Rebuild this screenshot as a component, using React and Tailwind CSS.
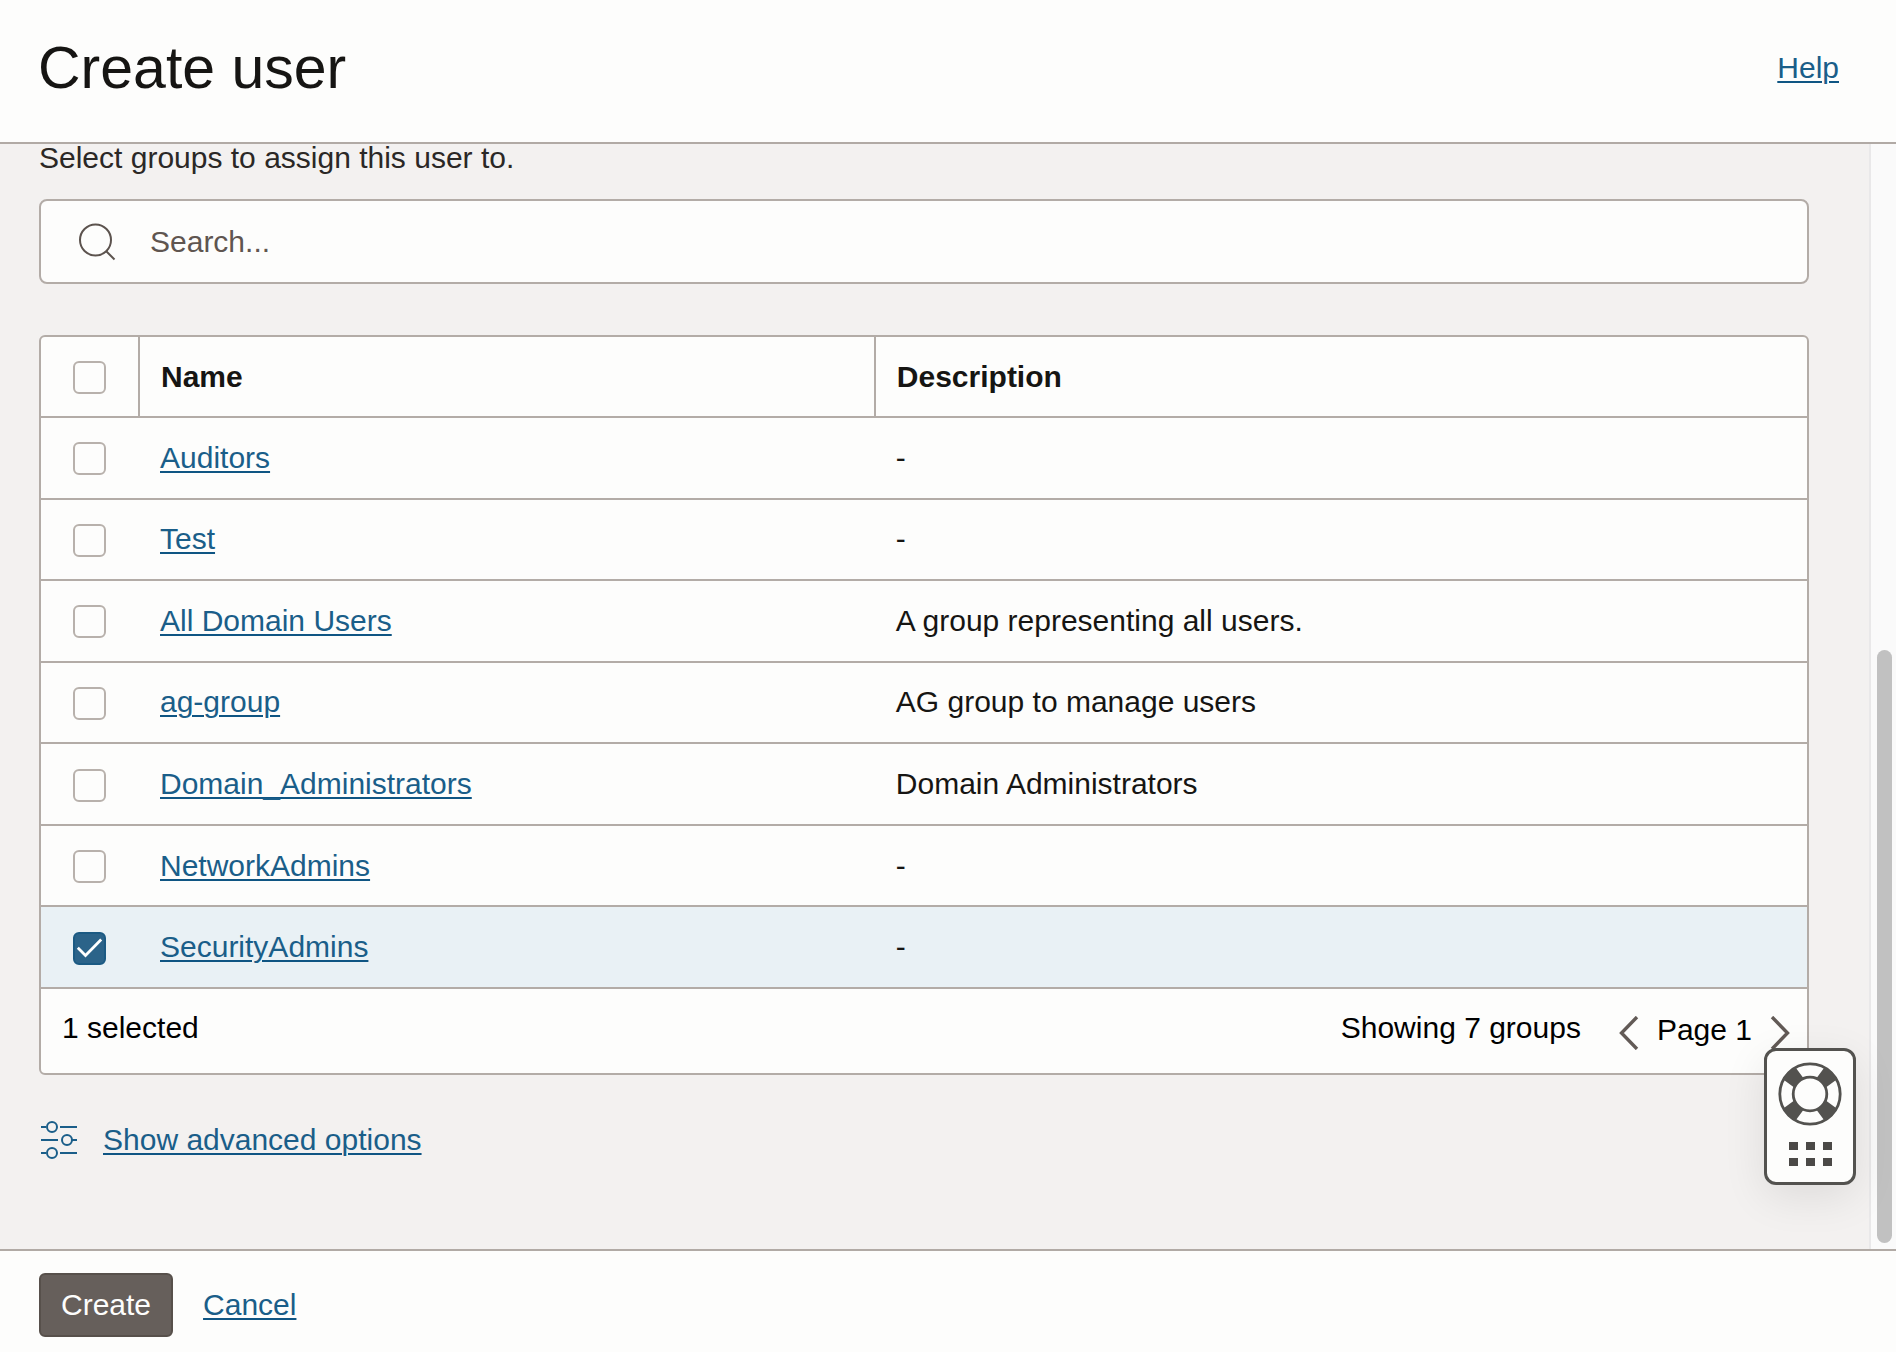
import { useState } from "react";

const GROUPS = [
  { name: "Auditors", description: "-" },
  { name: "Test", description: "-" },
  { name: "All Domain Users", description: "A group representing all users." },
  { name: "ag-group", description: "AG group to manage users" },
  { name: "Domain_Administrators", description: "Domain Administrators" },
  { name: "NetworkAdmins", description: "-" },
  { name: "SecurityAdmins", description: "-" },
];

function TextLink({ children }) {
  return (
    <a
      href="#"
      className="text-[#1a5e89] underline decoration-[#0f5583] decoration-2 underline-offset-[3px]"
    >
      {children}
    </a>
  );
}

function Checkbox({ label, checked, onChange }) {
  return (
    <label className="mx-auto grid size-[33px] cursor-pointer">
      <input
        type="checkbox"
        aria-label={label}
        checked={checked}
        onChange={onChange}
        className="peer col-start-1 row-start-1 size-[33px] appearance-none rounded-md border-2 border-[#b8b1ac] bg-[#fdfdfc] checked:border-[#1b5a83] checked:bg-[#2b6389]"
      />
      <svg
        viewBox="0 0 33 33"
        className="pointer-events-none col-start-1 row-start-1 hidden size-[33px] peer-checked:block"
        fill="none"
        stroke="#fff"
        strokeWidth="2.8"
      >
        <path d="M4.8 15.8l7.7 7.7L28.2 7.5" />
      </svg>
    </label>
  );
}

function SearchIcon() {
  return (
    <svg viewBox="0 0 38 38" className="size-[38px]" fill="none" stroke="#5c534e" strokeWidth="2">
      <circle cx="17.5" cy="17" r="15.5" />
      <path d="M28 28l8.5 8.5" />
    </svg>
  );
}

function SlidersIcon() {
  return (
    <svg viewBox="0 0 38 38" className="size-[38px]" fill="none" stroke="#1a5e89" strokeWidth="2">
      <path d="M2 6h5M21 6h17M2 19h17M33 19h5M2 32h5M21 32h17" />
      <circle cx="13" cy="6" r="5" />
      <circle cx="28" cy="19" r="5" />
      <circle cx="13" cy="32" r="5" />
    </svg>
  );
}

function Chevron({ direction }) {
  return (
    <svg viewBox="0 0 20 34" className="h-[34px] w-5" fill="none" stroke="#625a56" strokeWidth="3.4">
      <path d={direction === "left" ? "M18 1L2.5 17L18 33" : "M2 1L17.5 17L2 33"} />
    </svg>
  );
}

function LifebuoyIcon() {
  return (
    <svg viewBox="0 0 64 64" className="size-16" fill="none" stroke="#53524f">
      <circle cx="32" cy="32" r="30.2" strokeWidth="2.8" />
      <circle cx="32" cy="32" r="16.8" strokeWidth="2.8" />
      <g fill="#53524f" stroke="none">
        {[45, 135, 225, 315].map((angle) => (
          <path
            key={angle}
            d="M25.6 17L23.3 2.4Q32 -0.4 40.7 2.4L38.4 17Q32 14.2 25.6 17Z"
            transform={`rotate(${angle} 32 32)`}
          />
        ))}
      </g>
    </svg>
  );
}

export default function App() {
  const [selected, setSelected] = useState(["SecurityAdmins"]);
  const toggle = (name) =>
    setSelected((list) =>
      list.includes(name) ? list.filter((item) => item !== name) : [...list, name]
    );
  const allSelected = selected.length === GROUPS.length;

  return (
    <div className="flex h-screen flex-col bg-[#fdfdfc] font-['Liberation_Sans',Arial,sans-serif] text-[30px] leading-9 text-[#161513]">
      <header className="flex h-36 shrink-0 items-center justify-between border-b-2 border-[#b1aaa5] pr-[57px] pb-1.5 pl-[38px]">
        <h1 className="text-[59px] leading-none">Create user</h1>
        <TextLink>Help</TextLink>
      </header>

      <div className="flex min-h-0 flex-1 bg-[#f3f1f0]">
        <main className="min-w-0 flex-1 overflow-hidden pr-[60px] pl-[39px]">
          <p className="leading-7 text-[#2b2826]">Select groups to assign this user to.</p>

          <div className="mt-[27px] flex h-[85px] items-center gap-[34px] rounded-lg border-2 border-[#b3aca7] bg-[#fdfdfc] px-[37px]">
            <SearchIcon />
            <input
              type="search"
              aria-label="Search groups"
              placeholder="Search..."
              className="min-w-0 flex-1 bg-transparent outline-none placeholder:text-[#5f5550]"
            />
          </div>

          <section className="mt-[51px] overflow-hidden rounded-md border-2 border-[#b3aca7] bg-[#fdfdfc]">
            <table className="h-[652px] w-full table-fixed border-separate border-spacing-0 text-left">
              <thead>
                <tr className="h-[81px]">
                  <th className="w-[99px] border-r-2 border-b-2 border-[#b3aca7] pt-0.5">
                    <Checkbox
                      label="Select all groups"
                      checked={allSelected}
                      onChange={() => setSelected(allSelected ? [] : GROUPS.map((g) => g.name))}
                    />
                  </th>
                  <th className="w-5/12 border-r-2 border-b-2 border-[#b3aca7] px-[21px] font-bold">Name</th>
                  <th className="border-b-2 border-[#b3aca7] px-[21px] font-bold">Description</th>
                </tr>
              </thead>
              <tbody>
                {GROUPS.map((group) => {
                  const checked = selected.includes(group.name);
                  return (
                    <tr key={group.name} className={checked ? "bg-[#e9f1f5]" : ""}>
                      <td className="border-b-2 border-[#b3aca7] pt-0.5 pr-0.5">
                        <Checkbox
                          label={`Select ${group.name}`}
                          checked={checked}
                          onChange={() => toggle(group.name)}
                        />
                      </td>
                      <td className="border-b-2 border-[#b3aca7] px-5">
                        <TextLink>{group.name}</TextLink>
                      </td>
                      <td className="border-b-2 border-[#b3aca7] px-5">{group.description}</td>
                    </tr>
                  );
                })}
              </tbody>
            </table>

            <div className="flex h-[84px] items-center justify-between pr-[17px] pl-[21px] text-black">
              <span className="pb-1.5">{selected.length} selected</span>
              <div className="flex items-center">
                <span className="pb-1.5">Showing 7 groups</span>
                <button type="button" aria-label="Previous page" className="mt-1 ml-[38px]">
                  <Chevron direction="left" />
                </button>
                <span className="mx-[18px] pb-0.5">Page 1</span>
                <button type="button" aria-label="Next page" className="mt-1">
                  <Chevron direction="right" />
                </button>
              </div>
            </div>
          </section>

          <div className="mt-[46px] flex items-center gap-[26px]">
            <SlidersIcon />
            <TextLink>Show advanced options</TextLink>
          </div>
        </main>

        <div className="flex w-[27px] flex-col justify-end border-l-2 border-[#e9e8e9] bg-[#fafafa] pr-1 pb-1.5 pl-1.5">
          <div className="h-[54%] rounded-full bg-[#c1c1c1]" />
        </div>
      </div>

      <footer className="flex shrink-0 items-center gap-[30px] border-t-2 border-[#b1aaa5] pt-[22px] pb-[15px] pl-[39px]">
        <button
          type="button"
          className="h-16 rounded-md border-2 border-[#57504b] bg-[#665f5b] px-5 text-[#fdfdfc]"
        >
          Create
        </button>
        <TextLink>Cancel</TextLink>
      </footer>

      <button
        type="button"
        aria-label="Support"
        className="fixed right-10 bottom-[167px] flex w-[92px] flex-col items-center gap-4 rounded-xl border-3 border-[#53524f] bg-[#fdfdfc] pt-[11px] pb-4 shadow-[0_12px_44px_rgba(0,0,0,0.09)]"
      >
        <LifebuoyIcon />
        <span className="grid grid-cols-3 gap-2">
          {[0, 1, 2, 3, 4, 5].map((dot) => (
            <span key={dot} className="h-2 w-[9px] bg-[#4b4947]" />
          ))}
        </span>
      </button>
    </div>
  );
}
